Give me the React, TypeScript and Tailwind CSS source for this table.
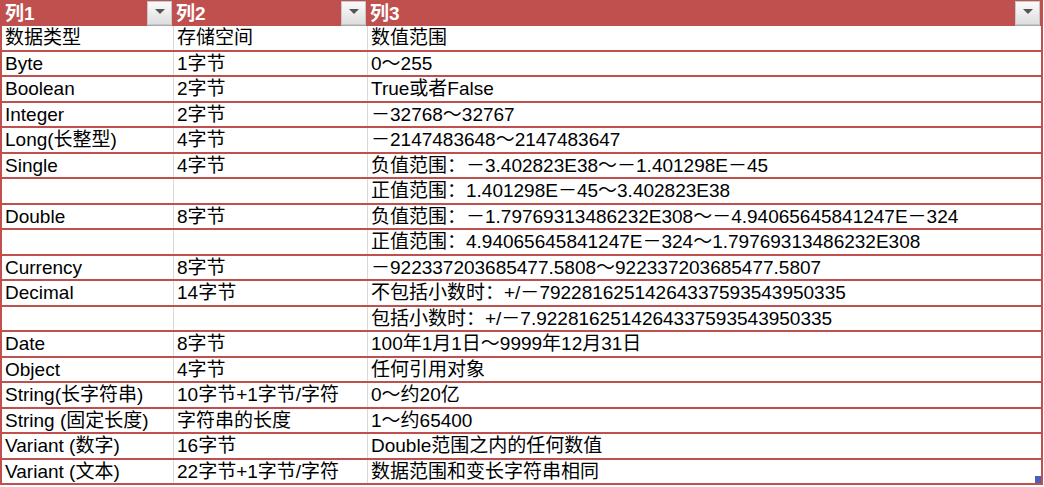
const rows: [string, string, string][] = [
  ["数据类型", "存储空间", "数值范围"],
  ["Byte", "1字节", "0～255"],
  ["Boolean", "2字节", "True或者False"],
  ["Integer", "2字节", "－32768～32767"],
  ["Long(长整型)", "4字节", "－2147483648～2147483647"],
  ["Single", "4字节", "负值范围：－3.402823E38～－1.401298E－45"],
  ["", "", "正值范围：1.401298E－45～3.402823E38"],
  ["Double", "8字节", "负值范围：－1.79769313486232E308～－4.94065645841247E－324"],
  ["", "", "正值范围：4.94065645841247E－324～1.79769313486232E308"],
  ["Currency", "8字节", "－922337203685477.5808～922337203685477.5807"],
  ["Decimal", "14字节", "不包括小数时：+/－79228162514264337593543950335"],
  ["", "", "包括小数时：+/－7.9228162514264337593543950335"],
  ["Date", "8字节", "100年1月1日～9999年12月31日"],
  ["Object", "4字节", "任何引用对象"],
  ["String(长字符串)", "10字节+1字节/字符", "0～约20亿"],
  ["String (固定长度)", "字符串的长度", "1～约65400"],
  ["Variant (数字)", "16字节", "Double范围之内的任何数值"],
  ["Variant (文本)", "22字节+1字节/字符", "数据范围和变长字符串相同"]
];

function FilterButton() {
  return (
    <div className="flex h-[24px] w-[25px] items-start justify-center border border-[#c8c8c8] bg-gradient-to-b from-[#fbfbfb] to-[#dedede] pt-[7px] shadow-[0_1px_0_#a9a9a9]">
      <div className="h-0 w-0 border-x-[5px] border-t-[5px] border-x-transparent border-t-[#555]" />
    </div>
  );
}

function HeaderCell({ label }: { label: string }) {
  return (
    <div className="flex h-[26px] items-center justify-between pl-[3px] pr-[1px]">
      <span className="font-bold text-white">{label}</span>
      <FilterButton />
    </div>
  );
}

export default function App() {
  return (
    <div
      className="w-[1043px] bg-white text-[19px] leading-none text-black"
      style={{ fontFamily: '"Liberation Sans", "Noto Sans CJK SC", sans-serif' }}
    >
      <div className="relative border-x-2 border-[#c0504d]">
        <div className="grid grid-cols-[171px_194px_1fr] bg-[#c0504d]">
          <HeaderCell label="列1" />
          <HeaderCell label="列2" />
          <HeaderCell label="列3" />
        </div>
        {rows.map((row, index) => (
          <div
            key={index}
            className="grid h-[25.5px] grid-cols-[171px_194px_1fr] border-b-2 border-[#c0504d]"
          >
            <div className="flex items-center whitespace-nowrap pl-[3px]">{row[0]}</div>
            <div className="flex items-center whitespace-nowrap border-l border-[#d9d9d9] pl-[3px]">{row[1]}</div>
            <div className="flex items-center whitespace-nowrap border-l border-[#d9d9d9] pl-[3px]">{row[2]}</div>
          </div>
        ))}
        <div className="absolute bottom-[2px] right-0 h-[7px] w-[6px] bg-[#4a5fb8]" />
      </div>
    </div>
  );
}
